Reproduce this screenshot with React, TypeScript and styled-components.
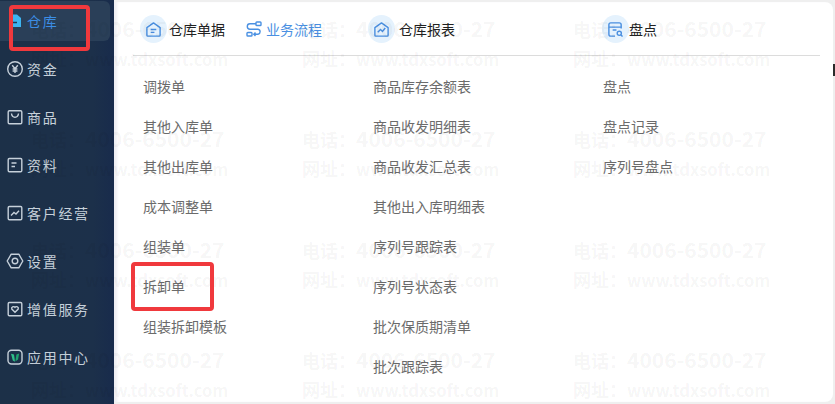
import React from 'react'
import styled, { createGlobalStyle } from 'styled-components'

const GlobalStyle = createGlobalStyle`
    html, body {
        margin: 0;
        padding: 0;
        background: #efefef;
    }
    body {
        font-family: "Noto Sans CJK SC", "Noto Sans", sans-serif;
    }
`

const Page = styled.div`
    position: relative;
    display: flex;
    width: 835px;
    height: 404px;
    overflow: hidden;
    background: #efefef;
`

const Sidebar = styled.nav`
    display: flex;
    flex-direction: column;
    flex: 0 0 114px;
    padding-top: 1px;
    box-sizing: border-box;
    background: linear-gradient(90deg, #1c3048 0%, #1c304a 82%, #182b4c 100%);
`

const NavItem = styled.div<{ $active?: boolean }>`
    display: flex;
    align-items: center;
    gap: 3px;
    width: 110px;
    height: 40px;
    margin-bottom: 8px;
    padding-left: 6px;
    box-sizing: border-box;
    border-radius: 0 6px 6px 0;
    font-size: 14px;
    letter-spacing: 1.7px;
    color: ${(p) => (p.$active ? '#3c8ee6' : '#c6d0da')};
    background: ${(p) => (p.$active ? '#2a3f58' : 'transparent')};
`

const NavIcon = styled.svg`
    flex: 0 0 18px;
    width: 18px;
    height: 18px;
    fill: none;
    stroke: #c6d0da;
    stroke-width: 1.4;
`

const Panel = styled.main`
    flex: 1;
    margin: 2px 2px 2px 0;
    border-radius: 0 8px 8px 0;
    background: #fff;
    box-shadow: inset 4px 0 3px -1px #eeeef3;
`

const Header = styled.header`
    display: grid;
    grid-template-columns: 230px 230px 1fr;
    height: 53px;
    margin: 0 13px 0 19px;
    padding-left: 6px;
    border-bottom: 1px solid #dcdcdc;
`

const HeaderCell = styled.div`
    display: flex;
    align-items: center;
    padding-top: 1px;
`

const IconCircle = styled.span<{ $shift: number }>`
    display: flex;
    align-items: center;
    justify-content: center;
    flex: 0 0 27px;
    width: 27px;
    height: 28px;
    margin-left: ${(p) => p.$shift}px;
    margin-right: ${(p) => 3 - p.$shift}px;
    border-radius: 50%;
    background: #e5f2fd;
    svg {
        width: 17px;
        height: 17px;
        fill: none;
        stroke: #4a8fe0;
        stroke-width: 1.5;
    }
`

const HeadTitle = styled.span`
    font-size: 14px;
    color: #222;
    white-space: nowrap;
`

const FlowTab = styled.span`
    display: flex;
    align-items: center;
    gap: 4px;
    margin-left: 21px;
    font-size: 14px;
    color: #4a90e2;
    white-space: nowrap;
    svg {
        width: 16px;
        height: 16px;
        fill: none;
        stroke: #4a90e2;
        stroke-width: 1.4;
    }
`

const Columns = styled.div`
    display: grid;
    grid-template-columns: 230px 230px 1fr;
    padding: 10px 0 0 29px;
`

const MenuList = styled.ul`
    margin: 0;
    padding: 0;
    list-style: none;
`

const MenuItem = styled.li`
    display: flex;
    align-items: center;
    height: 40px;
    font-size: 14px;
    color: #6b6b6b;
`

const Watermark = styled.div`
    position: absolute;
    top: 13px;
    left: -240px;
    display: grid;
    grid-template-columns: repeat(4, 271px);
    grid-auto-rows: 110.4px;
    pointer-events: none;
`

const WatermarkTile = styled.div`
    font-weight: 700;
    line-height: 30px;
    color: rgba(0, 0, 0, 0.05);
    white-space: nowrap;
`

const WatermarkLine = styled.div`
    display: flex;
    align-items: baseline;
    height: 30px;
`

const WatermarkLabel = styled.span`
    font-size: 18px;
`

const WatermarkPhone = styled.span`
    font-size: 21px;
`

const WatermarkUrl = styled.span`
    font-size: 16.5px;
`

const RedBox = styled.div<{ $x: number; $y: number; $w: number; $h: number }>`
    position: absolute;
    left: ${(p) => p.$x}px;
    top: ${(p) => p.$y}px;
    width: ${(p) => p.$w}px;
    height: ${(p) => p.$h}px;
    box-sizing: border-box;
    border: 4px solid #f0393d;
    border-radius: 4px;
`

const EdgeTick = styled.div`
    position: absolute;
    right: 0;
    top: 64px;
    width: 2px;
    height: 12px;
    background: #2b2b2b;
`

const ActiveIcon = () => (
    <NavIcon viewBox="0 0 18 18" style={{ stroke: 'none' }}>
        <path d="M3 7 L7 2.5 H11 L15 6 V15 H3 Z" fill="#3db5f2" />
        <path d="M5 10.5 H11" stroke="#1f3a55" strokeWidth="1.5" />
    </NavIcon>
)

const MoneyIcon = () => (
    <NavIcon viewBox="0 0 18 18">
        <circle cx="9" cy="9" r="7.3" />
        <path d="M6.2 5.2 L9 8.6 L11.8 5.2 M9 8.6 V13 M6.6 9 H11.4 M6.6 11 H11.4" />
    </NavIcon>
)

const BagIcon = () => (
    <NavIcon viewBox="0 0 18 18">
        <rect x="2.2" y="2.7" width="13.6" height="13" rx="1.2" />
        <path d="M5.5 5.5 C6 10.5 12 10.5 12.5 5.5" />
    </NavIcon>
)

const DocIcon = () => (
    <NavIcon viewBox="0 0 18 18">
        <rect x="2.2" y="2.5" width="13.6" height="13.2" rx="1.2" />
        <path d="M5.5 7 H10.5 M5.5 10.5 H9" />
    </NavIcon>
)

const ChartIcon = () => (
    <NavIcon viewBox="0 0 18 18">
        <rect x="2.2" y="2.5" width="13.6" height="13.2" rx="1.2" />
        <path d="M5 11.5 L8 8.5 L10 10 L13 6.8" />
    </NavIcon>
)

const GearIcon = () => (
    <NavIcon viewBox="0 0 18 18">
        <path d="M5.2 2.2 H12.8 L16.8 9 L12.8 15.8 H5.2 L1.2 9 Z" strokeLinejoin="round" />
        <circle cx="9" cy="9" r="2.8" />
    </NavIcon>
)

const ServiceIcon = () => (
    <NavIcon viewBox="0 0 18 18">
        <rect x="2.2" y="2.5" width="13.6" height="13.2" rx="1.2" />
        <path d="M9 12.2 L5.8 9 C5 7 7.6 5.8 9 7.4 C10.4 5.8 13 7 12.2 9 Z" />
    </NavIcon>
)

const AppIcon = () => (
    <NavIcon viewBox="0 0 18 18">
        <rect x="2" y="2.2" width="14" height="13.8" rx="3.5" />
        <path d="M5 5.8 L8 6.6 L9 13.8 L6.8 12.5 Z" fill="#2fc08a" stroke="none" />
        <path d="M9.4 13.4 L10.4 6.5 L13.2 5.4 L12 11.5 Z" fill="#1fa36f" stroke="none" />
    </NavIcon>
)

const navItems: { label: string; icon: React.ReactElement; active?: boolean }[] = [
    { label: '仓库', icon: <ActiveIcon />, active: true },
    { label: '资金', icon: <MoneyIcon /> },
    { label: '商品', icon: <BagIcon /> },
    { label: '资料', icon: <DocIcon /> },
    { label: '客户经营', icon: <ChartIcon /> },
    { label: '设置', icon: <GearIcon /> },
    { label: '增值服务', icon: <ServiceIcon /> },
    { label: '应用中心', icon: <AppIcon /> },
]

const menuColumns = [
    ['调拨单', '其他入库单', '其他出库单', '成本调整单', '组装单', '拆卸单', '组装拆卸模板'],
    ['商品库存余额表', '商品收发明细表', '商品收发汇总表', '其他出入库明细表', '序列号跟踪表', '序列号状态表', '批次保质期清单', '批次跟踪表'],
    ['盘点', '盘点记录', '序列号盘点'],
]

const App: React.FC = () => {
    return (
        <Page>
            <GlobalStyle />
            <Sidebar>
                {navItems.map((item) => (
                    <NavItem key={item.label} $active={item.active}>
                        {item.icon}
                        {item.label}
                    </NavItem>
                ))}
            </Sidebar>
            <Panel>
                <Header>
                    <HeaderCell>
                        <IconCircle $shift={1}>
                            <svg viewBox="0 0 18 18">
                                <path d="M2 7 L9 2 L16 7 V15 A1 1 0 0 1 15 16 H3 A1 1 0 0 1 2 15 Z" strokeLinejoin="round" />
                                <path d="M6 9 H12 M6 12 H10" />
                            </svg>
                        </IconCircle>
                        <HeadTitle>仓库单据</HeadTitle>
                        <FlowTab>
                            <svg viewBox="0 0 16 16">
                                <rect x="10" y="1" width="5" height="3.5" rx="0.8" />
                                <rect x="1" y="11.5" width="5" height="3.5" rx="0.8" />
                                <path d="M10 2.8 H4 A2.7 2.7 0 0 0 4 8.2 H12 A2.6 2.6 0 0 1 12 13.3 H8 M9.5 11.5 L7.8 13.3 L9.5 15" />
                            </svg>
                            业务流程
                        </FlowTab>
                    </HeaderCell>
                    <HeaderCell>
                        <IconCircle $shift={-1}>
                            <svg viewBox="0 0 18 18">
                                <path d="M2 7 L9 2 L16 7 V15 A1 1 0 0 1 15 16 H3 A1 1 0 0 1 2 15 Z" strokeLinejoin="round" />
                                <path d="M5 12 L8 9 L10 11 L13 7.5" />
                            </svg>
                        </IconCircle>
                        <HeadTitle>仓库报表</HeadTitle>
                    </HeaderCell>
                    <HeaderCell>
                        <IconCircle $shift={3}>
                            <svg viewBox="0 0 18 18">
                                <path d="M8.5 16 H4 A2 2 0 0 1 2 14 V4 A2 2 0 0 1 4 2 H13 A2 2 0 0 1 15 4 V8" />
                                <path d="M2 6.5 H15 M6 9.5 H10" />
                                <circle cx="13" cy="13" r="2.2" />
                                <path d="M14.7 14.7 L16.5 16.5" />
                            </svg>
                        </IconCircle>
                        <HeadTitle>盘点</HeadTitle>
                    </HeaderCell>
                </Header>
                <Columns>
                    {menuColumns.map((col) => (
                        <MenuList key={col[0]}>
                            {col.map((name) => (
                                <MenuItem key={name}>{name}</MenuItem>
                            ))}
                        </MenuList>
                    ))}
                </Columns>
            </Panel>
            <Watermark aria-hidden="true">
                {Array.from({ length: 16 }, (_, i) => (
                    <WatermarkTile key={i}>
                        <WatermarkLine>
                            <WatermarkLabel>电话：</WatermarkLabel>
                            <WatermarkPhone>4006-6500-27</WatermarkPhone>
                        </WatermarkLine>
                        <WatermarkLine>
                            <WatermarkLabel>网址：</WatermarkLabel>
                            <WatermarkUrl>www.tdxsoft.com</WatermarkUrl>
                        </WatermarkLine>
                    </WatermarkTile>
                ))}
            </Watermark>
            <RedBox $x={9} $y={5} $w={81} $h={46} />
            <RedBox $x={131} $y={262} $w={83} $h={49} />
            <EdgeTick />
        </Page>
    )
}

export default App
